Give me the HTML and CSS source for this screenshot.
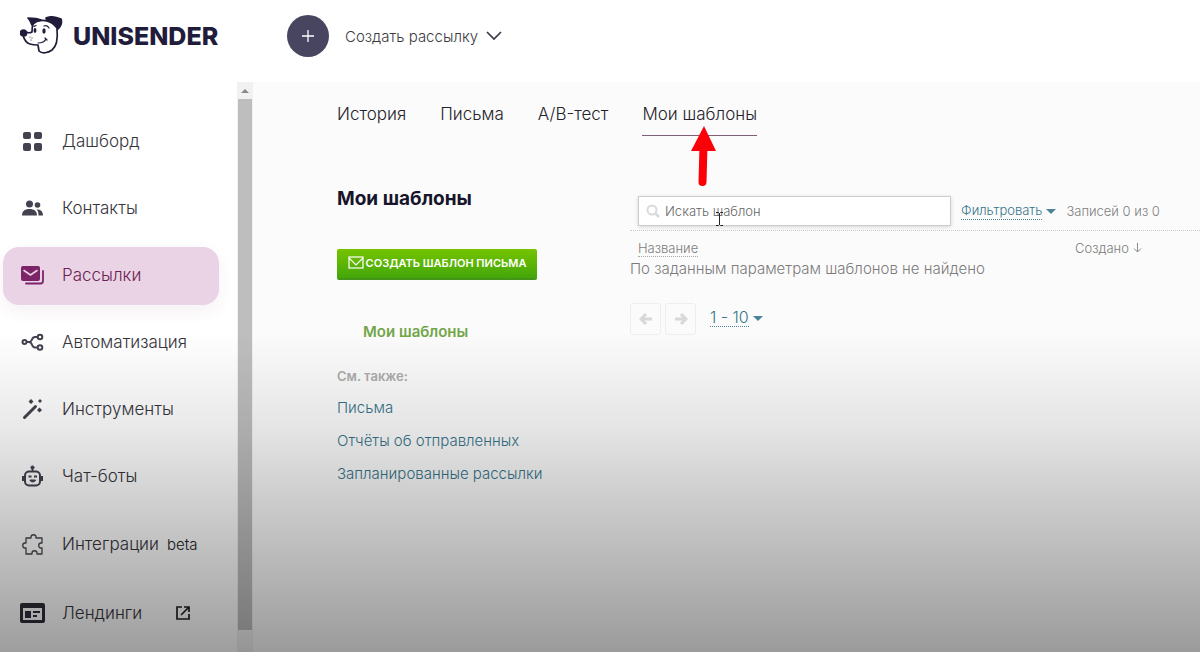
FILE: index.html
```html
<!DOCTYPE html>
<html lang="ru">
<head>
    <meta charset="UTF-8">
    <meta name="viewport" content="width=device-width, initial-scale=1.0">
    <title>Мои шаблоны</title>
    <link rel="stylesheet" href="styles.css">
</head>
<body>
    <header class="header">
        <a href="#" class="logo">
            <svg width="44" height="40" viewBox="0 0 44 40" fill="none" stroke="#211c3b" stroke-width="1.700" stroke-linecap="round" stroke-linejoin="round">
                <path d="M13 8C12 11 12 13 12 16C10 17 8 17 6 16M3 19C4 23 6 27 10 28C13 29 16 29 18 29L19 35C22 38 28 37 32 34C37 30 38 23 37 13M14 6C19 4 24 4 28 5"/>
                <path d="M8 2C13 2 17 2 21 4C17 5 15 6 12 9C11 6 10 4 8 2Z" fill="#211c3b"/>
                <path d="M26 2C30 0 36 1 41 3C42 6 41 10 38 13C36 11 34 7 27 5Z" fill="#211c3b"/>
                <ellipse cx="3.500" cy="17" rx="3" ry="3" fill="#211c3b"/>
                <ellipse cx="15" cy="14.500" rx=".6" ry="1.600" fill="#211c3b"/>
                <ellipse cx="24" cy="15" rx=".8" ry="1.800" fill="#211c3b"/>
                <path d="M14 10.500L16 9.500M24 10C26 9 28 10 29 12M18 27C22 27 25 25 26 23M25 22L27 24M10 21V21M12 22V22M11 24V24" stroke-width="1.200"/>
            </svg>
            <span class="logo-text">UNISENDER</span>
        </a>
        <button class="add-button" aria-label="Создать">
            <svg width="12" height="12" viewBox="0 0 12 12" stroke="#fff" stroke-width="1.300"><path d="M6 0V12M0 6H12"/></svg>
        </button>
        <button class="create-menu">
            Создать рассылку
            <svg width="16" height="10" viewBox="0 0 16 10" fill="none" stroke="#3c3b47" stroke-width="1.700"><path d="M1 1L8 8L15 1"/></svg>
        </button>
    </header>

    <div class="page">
        <nav class="sidebar">
            <a href="#" class="nav-item">
                <svg width="26" height="26" viewBox="0 0 26 26" fill="#45424f"><rect x="3" y="4" width="8" height="7" rx="2"/><rect x="14" y="4" width="8" height="7" rx="2"/><rect x="3" y="15" width="8" height="8" rx="2"/><rect x="14" y="15" width="8" height="8" rx="2"/></svg>
                Дашборд
            </a>
            <a href="#" class="nav-item">
                <svg width="26" height="26" viewBox="0 0 26 26" fill="#45424f"><circle cx="9.500" cy="9" r="3.500"/><circle cx="17.500" cy="10" r="2.800"/><path d="M2 20.500C2 16 5 14 9.500 14S17 16 17 20.500ZM18.500 20.500C18.500 17 18 16 16.500 14.500C20 14 23 16 23 20.500Z"/></svg>
                Контакты
            </a>
            <a href="#" class="nav-item active">
                <svg width="26" height="26" viewBox="0 0 26 26" fill="none" stroke-linecap="round" stroke-linejoin="round"><rect x="1" y="4" width="19" height="15" rx="2" fill="#7d2468"/><path d="M4 8.500L10.500 13L17 8.500" stroke="#ead3e4" stroke-width="1.600"/><path d="M23 9V19Q23 21.500 20.500 21.500H6" stroke="#7d2468" stroke-width="1.800"/></svg>
                Рассылки
            </a>
            <a href="#" class="nav-item">
                <svg width="26" height="26" viewBox="0 0 26 26" fill="none" stroke="#45424f" stroke-width="2"><circle cx="4.500" cy="13" r="2"/><circle cx="20" cy="8" r="2.300"/><circle cx="20" cy="18.500" r="2.300"/><path d="M7 13H9C13 13 11 8 15 8H18M9 13C13 13 11 18.500 15 18.500H18"/></svg>
                Автоматизация
            </a>
            <a href="#" class="nav-item">
                <svg width="26" height="26" viewBox="0 0 26 26" fill="#45424f"><path d="M4.500 21.500L15.500 10.500" stroke="#45424f" stroke-width="3" stroke-linecap="round"/><path d="M11 3L13.500 5.500L11 8L8.500 5.500ZM20 3L22 5L20 7L18 5ZM19.500 11.500L22 14L19.500 16.500L17 14Z"/></svg>
                Инструменты
            </a>
            <a href="#" class="nav-item">
                <svg width="26" height="26" viewBox="0 0 26 26" fill="none" stroke="#45424f"><rect x="5" y="8.500" width="15" height="14" rx="4" stroke-width="2"/><path d="M12.500 8V4" stroke-width="1.800"/><circle cx="12.500" cy="4.500" r="1.600" fill="#45424f"/><path d="M3 13V18M22 13V18" stroke-width="2"/><path d="M8.500 13.500H11.500M14 13.500H17" stroke-width="1.800"/><path d="M10 17H15.500C15.500 19.500 10 19.500 10 17Z" fill="#45424f"/></svg>
                Чат-боты
            </a>
            <a href="#" class="nav-item tall">
                <svg width="26" height="26" viewBox="0 0 26 26" fill="none" stroke="#4a4850" stroke-width="1.300" stroke-linejoin="round"><path d="M6 7H11V6C11 3 16 3 16 6V7H22V12H21C18 12 18 17 21 17H22V23H17V22C17 19 12 19 12 22V23H6V17H5C2 17 2 12 5 12H6Z"/></svg>
                Интеграции <span class="beta">beta</span>
            </a>
            <a href="#" class="nav-item tall">
                <svg width="26" height="26" viewBox="0 0 26 26" fill="#302e3c"><path fill-rule="evenodd" d="M2 3H23Q25 3 25 5V21Q25 23 23 23H2Q0 23 0 21V5Q0 3 2 3ZM3 8V20H22V8Z"/><path d="M5 11H11V18H5ZM13 11H20V13H13ZM13 15H17V17H13Z"/></svg>
                Лендинги
                <svg class="external" width="14" height="14" viewBox="0 0 14 14" fill="none" stroke="#222" stroke-width="1.700"><path d="M6 1H1V13H13V8M8 1H13V6M13 1L5 9"/></svg>
            </a>
        </nav>
        <div class="scrollbar">
            <span class="scroll-arrow"></span>
            <span class="scroll-thumb"></span>
        </div>

        <main class="content">
            <div class="tabs">
                <a href="#" class="tab">История</a>
                <a href="#" class="tab">Письма</a>
                <a href="#" class="tab">A/B-тест</a>
                <a href="#" class="tab current">Мои шаблоны
                    <svg class="arrow" width="26" height="62" viewBox="0 0 26 62"><path d="M12.500 20L11.500 56" stroke="#fb0007" stroke-width="8" stroke-linecap="round"/><path d="M13 0L25 25H0Z" fill="#fb0007"/></svg>
                </a>
            </div>

            <div class="columns">
                <div class="side">
                    <h1>Мои шаблоны</h1>
                    <button class="create-template">
                        <svg width="16" height="13" viewBox="0 0 16 13" fill="none" stroke="#fff" stroke-width="1.200"><rect x="1" y="1" width="14" height="11"/><path d="M1 2L8 9L15 2"/></svg>
                        СОЗДАТЬ ШАБЛОН ПИСЬМА
                    </button>
                    <a href="#" class="side-current">Мои шаблоны</a>
                    <h2>См. также:</h2>
                    <ul class="side-links">
                        <li><a href="#">Письма</a></li>
                        <li><a href="#">Отчёты об отправленных</a></li>
                        <li><a href="#">Запланированные рассылки</a></li>
                    </ul>
                </div>

                <div class="templates">
                    <div class="toolbar">
                        <label class="search">
                            <svg width="14" height="14" viewBox="0 0 14 14" fill="none" stroke="#dadada" stroke-width="2"><circle cx="6" cy="6" r="4.500"/><path d="M9 9L13 13" stroke-width="2.500"/></svg>
                            <input type="text" placeholder="Искать шаблон" aria-label="Искать шаблон">
                            <svg class="cursor" width="7" height="14" viewBox="0 0 7 14" fill="none" stroke="#222"><path d="M0 .5H2.500L3.500 1.500L4.500 .5H7M3.500 1V13M0 13.500H2.500L3.500 12.500L4.500 13.500H7"/></svg>
                        </label>
                        <button class="dropdown"><span>Фильтровать</span></button>
                        <span class="count">Записей 0 из 0</span>
                    </div>
                    <table class="list">
                        <thead>
                            <tr>
                                <th><a href="#">Название</a></th>
                                <th class="created">Создано <svg width="9" height="10" viewBox="0 0 9 10" fill="none" stroke="#888"><path d="M4.500 0V9M1 5.500L4.500 9L8 5.500"/></svg></th>
                            </tr>
                        </thead>
                        <tbody>
                            <tr><td colspan="2">По заданным параметрам шаблонов не найдено</td></tr>
                        </tbody>
                    </table>
                    <div class="pager">
                        <button class="page-button" aria-label="Назад"><svg width="14" height="12" viewBox="0 0 14 12" fill="none" stroke="#d8d8d8" stroke-width="3"><path d="M7 1L2 6L7 11M2 6H13"/></svg></button>
                        <button class="page-button" aria-label="Вперёд"><svg width="14" height="12" viewBox="0 0 14 12" fill="none" stroke="#d8d8d8" stroke-width="3"><path d="M7 1L12 6L7 11M12 6H1"/></svg></button>
                        <button class="dropdown range"><span>1 - 10</span></button>
                    </div>
                </div>
            </div>
        </main>
    </div>
</body>
</html>
```
FILE: styles.css
```css
* {
    box-sizing: border-box;
}

body {
    margin: 0;
    min-height: 100vh;
    display: flex;
    flex-direction: column;
    font-family: Inter, "Noto Sans", sans-serif;
    font-weight: 300;
    background: #fff;
    color: #45444c;
}

/* dark shade at the bottom of the window */
body::after {
    content: "";
    position: fixed;
    inset: 0;
    background: linear-gradient(transparent 51%, rgba(0, 0, 0, 0.09) 66%, rgba(0, 0, 0, 0.24) 83%, rgba(0, 0, 0, 0.38));
    pointer-events: none;
}

a {
    color: inherit;
    text-decoration: none;
}

button {
    font-family: inherit;
    font-weight: inherit;
    background: none;
    border: none;
    padding: 0;
    cursor: pointer;
}

svg {
    flex: none;
}

.header {
    display: flex;
    align-items: center;
    height: 82px;
    padding: 0 20px 10px;
}

.logo {
    display: flex;
    align-items: center;
    gap: 9px;
    width: 267px;
}

.logo-text {
    font-size: 25px;
    font-weight: 800;
    color: #211c3b;
}

.add-button {
    display: flex;
    align-items: center;
    justify-content: center;
    width: 42px;
    height: 42px;
    border-radius: 50%;
    background: #47455f;
}

.create-menu {
    display: flex;
    align-items: center;
    gap: 8px;
    margin-left: 16px;
    font-size: 15px;
    color: #3c3b42;
}

.page {
    flex: 1;
    display: flex;
}

.sidebar {
    display: flex;
    flex-direction: column;
    gap: 9px;
    width: 237px;
    padding: 31px 18px 0 3px;
}

.nav-item {
    display: flex;
    align-items: center;
    gap: 16px;
    height: 58px;
    padding: 0 0 2px 17px;
    border-radius: 16px;
    font-size: 17px;
    color: #36353c;
}

.nav-item.tall {
    height: 60px;
}

.nav-item.active {
    background: #ead3e4;
    color: #6a1f55;
    box-shadow: 0 6px 16px rgba(120, 40, 100, 0.07);
}

.beta {
    margin-left: -8px;
    font-size: 15px;
    color: #222;
}

.external {
    margin-left: 18px;
}

.scrollbar {
    display: flex;
    flex-direction: column;
    align-items: center;
    width: 16px;
    background: #f1f1f1;
}

.scroll-arrow {
    margin: 7px 0 6px;
    border: 4px solid transparent;
    border-top: 0;
    border-bottom-color: #888;
}

.scroll-thumb {
    flex: 1;
    width: 14px;
    margin-bottom: 22px;
    background: #bebebe;
}

.content {
    flex: 1;
    padding: 20px 0 0 84px;
    background: #fbfbfb;
}

.tabs {
    display: flex;
    gap: 34px;
}

.tab {
    height: 34px;
    line-height: 25px;
    font-size: 17px;
    color: #25242c;
}

.tab.current {
    position: relative;
    border-bottom: 1px solid #7d6075;
}

.arrow {
    position: absolute;
    left: 49px;
    top: 24px;
}

.columns {
    display: grid;
    grid-template-columns: 293px 1fr;
    margin-top: 50px;
}

h1 {
    margin: 0 0 37px;
    line-height: 26px;
    font-size: 19px;
    font-weight: 700;
    color: #17152b;
}

.create-template {
    display: flex;
    align-items: center;
    justify-content: center;
    gap: 2px;
    width: 200px;
    height: 31px;
    padding-bottom: 2px;
    border-bottom: 2px solid #43951a;
    border-radius: 2px;
    background: linear-gradient(#76c400, #43a60a);
    font-size: 11px;
    font-weight: 600;
    color: #fff;
}

.side-current {
    display: block;
    margin: 40px 0 0 26px;
    line-height: 24px;
    font-size: 15px;
    font-weight: 600;
    color: #72a649;
}

h2 {
    margin: 22px 0 12px;
    line-height: 20px;
    font-size: 13px;
    font-weight: 600;
    color: #adadad;
}

.side-links {
    list-style: none;
    margin: 0;
    padding: 0;
}

.side-links li {
    height: 33px;
    line-height: 20px;
    font-size: 15px;
    color: #35748a;
}

.toolbar {
    display: flex;
    align-items: center;
    gap: 10px;
    padding: 10px 0 4px 8px;
    border-bottom: 1px dotted #ccc;
    font-size: 13px;
}

.search {
    position: relative;
    display: flex;
    align-items: center;
    gap: 5px;
    width: 313px;
    height: 30px;
    padding: 0 7px;
    border: 1px solid #ccc;
    background: #fff;
    box-shadow: 0 1px 4px rgba(0, 0, 0, 0.15);
}

.search input {
    flex: 1;
    min-width: 0;
    padding: 0;
    border: none;
    outline: none;
    background: none;
    font-family: inherit;
    font-size: 13px;
    font-weight: inherit;
}

.search input::placeholder {
    color: #666;
    opacity: 1;
}

.cursor {
    position: absolute;
    left: 77px;
    top: 15px;
}

.dropdown {
    display: flex;
    align-items: center;
    gap: 4px;
    font-size: 13px;
    color: #35748a;
}

.dropdown span {
    line-height: 17px;
    border-bottom: 1px dotted #4b8498;
}

.dropdown::after {
    content: "";
    border: 5px solid transparent;
    border-top-color: #4b8498;
    border-bottom: 0;
}

.count {
    color: #808080;
}

.list {
    width: 100%;
    border-collapse: collapse;
    color: #7c7c7c;
}

.list th {
    height: 28px;
    padding: 6px 0 0 8px;
    text-align: left;
    font-size: 13px;
    font-weight: 300;
}

.list th a {
    border-bottom: 1px dotted #aaa;
}

.list .created {
    width: 133px;
}

.list td {
    padding: 0;
    line-height: 20px;
    font-size: 15px;
}

.pager {
    display: flex;
    align-items: center;
    gap: 4px;
    margin-top: 24px;
}

.page-button {
    display: flex;
    align-items: center;
    justify-content: center;
    width: 31px;
    height: 32px;
    border: 1px solid #eee;
    border-radius: 3px;
}

.range {
    margin-left: 10px;
    padding-bottom: 2px;
    font-size: 16px;
}
```
